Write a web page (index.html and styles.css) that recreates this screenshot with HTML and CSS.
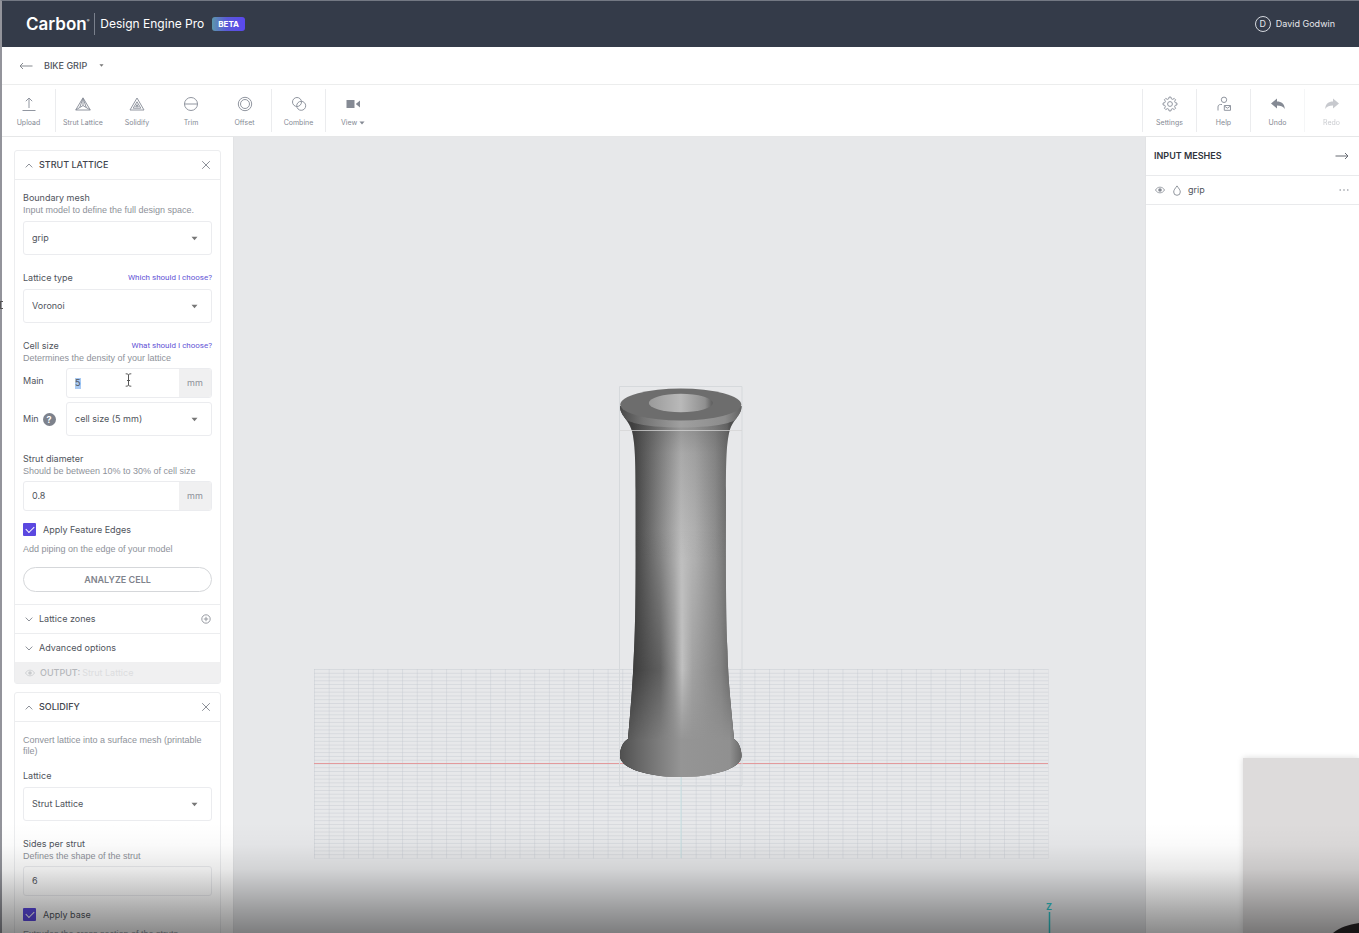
FILE: index.html
```
<!DOCTYPE html>
<html lang="en">
<head>
<meta charset="utf-8">
<title>Carbon Design Engine Pro</title>
<link rel="stylesheet" href="styles.css">
</head>
<body>
<svg width="0" height="0" class="defs" aria-hidden="true">
  <symbol id="caret" viewBox="0 0 8 5"><path d="M.6.6h6.8L4 4.6z" fill="currentColor"/></symbol>
  <symbol id="up" viewBox="0 0 8 5"><path d="M.7 4.4 4 1l3.300 3.400" fill="none" stroke="currentColor"/></symbol>
  <symbol id="down" viewBox="0 0 8 5"><path d="M.7.6 4 4 7.300.6" fill="none" stroke="currentColor"/></symbol>
  <symbol id="close" viewBox="0 0 10 10"><path d="m1.200 1.200 7.600 7.600m0-7.600L1.200 8.800" fill="none" stroke="currentColor"/></symbol>
  <symbol id="eye" viewBox="0 0 12 10"><path d="M1.500 5C3.500 1.200 8.500 1.200 10.500 5 8.500 8.800 3.500 8.800 1.500 5z" fill="none" stroke="currentColor" stroke-width=".8"/><circle cx="6" cy="5" r="1.800" fill="currentColor"/></symbol>
</svg>

<header class="topbar">
  <div class="brand"><span class="logo">Carbon<sup>®</sup></span><span class="product">Design Engine Pro</span><span class="badge">BETA</span></div>
  <button class="user"><span class="avatar">D</span>David Godwin</button>
</header>

<nav class="crumb">
  <button class="plain" aria-label="Back"><svg width="14" height="8" viewBox="0 0 14 8"><path d="M4 1 1 4l3 3M1 4h12.500" fill="none" stroke="#85898f"/></svg></button>
  <button class="project">BIKE GRIP <svg width="5" height="3"><use href="#caret"/></svg></button>
</nav>

<div class="toolbar">
  <div class="tools">
    <button class="tool sep"><svg viewBox="0 0 16 16"><path d="M8 12V2M4.800 5.200 8 2l3.200 3.200M1.500 14.500h13"/></svg>Upload</button>
    <button class="tool"><svg viewBox="0 0 16 16"><path d="M8 1.800 15.300 14H.7zM8 2v7.500M.9 13.900 8 9.500l7.100 4.400M8 2 4.800 11.300M8 2l3.200 9.300"/></svg>Strut Lattice</button>
    <button class="tool"><svg viewBox="0 0 16 16"><path d="M8 2 15 14H1zM8 5.800l3.800 6.400H4.200zM8 8.600l1.300 2.200H6.700z"/></svg>Solidify</button>
    <button class="tool"><svg viewBox="0 0 16 16"><circle cx="8" cy="8" r="6.500"/><path d="M1.500 8h13"/></svg>Trim</button>
    <button class="tool sep"><svg viewBox="0 0 16 16"><circle cx="8" cy="8" r="6.700"/><circle cx="8" cy="8" r="4.500"/></svg>Offset</button>
    <button class="tool sep"><svg viewBox="0 0 16 16"><circle cx="6" cy="6" r="4.500"/><circle cx="10.200" cy="9.800" r="4.500"/></svg>Combine</button>
    <button class="tool"><svg viewBox="0 0 16 16"><path class="solid" d="M1.500 4h8v8h-8zM15 4.500v7L10.800 8z"/></svg><span>View <svg class="tiny"><use href="#caret"/></svg></span></button>
  </div>
  <div class="tools right">
    <button class="tool"><svg viewBox="0 0 16 16"><g transform="translate(8 8)"><path stroke-linejoin="round" d="M-1.300-5.200-1-6.900H1L1.300-5.200 2.800-4.600 4.200-5.600 5.600-4.200 4.600-2.800 5.200-1.300 6.900-1V1L5.200 1.300 4.600 2.800 5.600 4.200 4.200 5.600 2.800 4.600 1.300 5.200 1 6.900H-1L-1.300 5.200-2.800 4.600-4.200 5.600-5.600 4.200-4.600 2.800-5.200 1.300-6.900 1V-1L-5.200-1.300-4.600-2.800-5.600-4.200-4.200-5.600-2.800-4.600z"/><circle r="2.400"/></g></svg>Settings</button>
    <button class="tool"><svg viewBox="0 0 16 16"><circle cx="8" cy="3.800" r="2.700"/><path d="M2 14.500V11c0-1.600 1-2.500 2.500-2.500H6M8.300 9.500h6.200v4.800H8.300zM8.300 10l3.100 2.200 3.100-2.200"/></svg>Help</button>
    <button class="tool"><svg viewBox="0 0 16 16"><path class="solid" d="M1 7.500 7 2.500v3c4.500 0 7.500 2 7.800 7.500C13 10.200 10.500 9.500 7 9.500v3z"/></svg>Undo</button>
    <button class="tool" disabled><svg viewBox="0 0 16 16"><path class="solid" d="M15 7.500 9 2.500v3c-4.500 0-7.500 2-7.800 7.500C3 10.200 5.500 9.500 9 9.500v3z"/></svg>Redo</button>
  </div>
</div>

<main class="work">
  <aside class="side">
    <section class="card">
      <div class="card-head"><svg width="8" height="5"><use href="#up"/></svg><h2>STRUT LATTICE</h2><button class="plain" aria-label="Close"><svg width="10" height="10"><use href="#close"/></svg></button></div>
      <div class="card-body">
        <div class="field">
          <label for="mesh">Boundary mesh</label><p>Input model to define the full design space.</p>
          <div class="select"><select id="mesh"><option>grip</option></select><svg><use href="#caret"/></svg></div>
        </div>
        <div class="field">
          <div class="row"><label for="type">Lattice type</label><a href="#">Which should I choose?</a></div>
          <div class="select"><select id="type"><option>Voronoi</option></select><svg><use href="#caret"/></svg></div>
        </div>
        <div class="field">
          <div class="row"><label for="main">Cell size</label><a href="#">What should I choose?</a></div><p>Determines the density of your lattice</p>
          <div class="pair"><label for="main">Main</label><div class="unit"><input id="main" class="marked" value="5"><span>mm</span></div></div>
          <div class="pair"><label for="min">Min <i class="help">?</i></label><div class="select"><select id="min"><option>cell size (5 mm)</option></select><svg><use href="#caret"/></svg></div></div>
        </div>
        <div class="field">
          <label for="diameter">Strut diameter</label><p>Should be between 10% to 30% of cell size</p>
          <div class="unit"><input id="diameter" value="0.8"><span>mm</span></div>
        </div>
        <div class="check"><input type="checkbox" id="edges" checked><label for="edges">Apply Feature Edges</label></div>
        <p>Add piping on the edge of your model</p>
        <button class="analyze">ANALYZE CELL</button>
      </div>
      <div class="fold"><svg width="8" height="5"><use href="#down"/></svg>Lattice zones<button class="plain" aria-label="Add zone"><svg width="10" height="10" viewBox="0 0 10 10"><g fill="none" stroke="currentColor" stroke-width=".9"><circle cx="5" cy="5" r="4.200"/><path d="M5 2.800v4.400M2.800 5h4.400"/></g></svg></button></div>
      <div class="fold"><svg width="8" height="5"><use href="#down"/></svg>Advanced options</div>
      <div class="output"><svg width="12" height="10"><use href="#eye"/></svg><b>OUTPUT:</b><span>Strut Lattice</span></div>
    </section>
    <section class="card">
      <div class="card-head"><svg width="8" height="5"><use href="#up"/></svg><h2>SOLIDIFY</h2><button class="plain" aria-label="Close"><svg width="10" height="10"><use href="#close"/></svg></button></div>
      <div class="card-body">
        <p class="intro">Convert lattice into a surface mesh (printable file)</p>
        <div class="field">
          <label for="lattice">Lattice</label>
          <div class="select"><select id="lattice"><option>Strut Lattice</option></select><svg><use href="#caret"/></svg></div>
        </div>
        <div class="field">
          <label for="sides">Sides per strut</label><p>Defines the shape of the strut</p>
          <div class="unit"><input id="sides" value="6"></div>
        </div>
        <div class="check"><input type="checkbox" id="base" checked><label for="base">Apply base</label></div>
        <p>Extrudes the cross section of the struts</p>
      </div>
    </section>
  </aside>

  <section class="viewport" aria-label="3D view">
    <svg viewBox="234 137 911 796" preserveAspectRatio="xMidYMin meet">
      <defs>
        <pattern id="grid" x="314" y="669" width="14.680" height="3.780" patternUnits="userSpaceOnUse"><path d="M0 .5h14.680" stroke="#bfc4cb" stroke-width=".8" opacity=".5"/><path d="M.5 0v3.780" stroke="#bcc4cb" stroke-width=".8" opacity=".45"/></pattern>
        <linearGradient id="body" gradientUnits="userSpaceOnUse" x1="632" x2="730" y1="0" y2="0"><stop offset="0" stop-color="#3c3c3c"/><stop offset=".1" stop-color="#585858"/><stop offset=".3" stop-color="#8c8c8c"/><stop offset=".5" stop-color="#c0c0c0"/><stop offset=".64" stop-color="#b4b4b4"/><stop offset=".85" stop-color="#909090"/><stop offset=".97" stop-color="#707070"/><stop offset="1" stop-color="#555"/></linearGradient>
        <linearGradient id="low" gradientUnits="userSpaceOnUse" x1="624" x2="738" y1="0" y2="0"><stop offset="0" stop-color="#303030"/><stop offset=".1" stop-color="#404040"/><stop offset=".32" stop-color="#606060"/><stop offset=".44" stop-color="#949494"/><stop offset=".51" stop-color="#c0c0c0"/><stop offset=".6" stop-color="#a2a2a2"/><stop offset=".85" stop-color="#828282"/><stop offset="1" stop-color="#555"/></linearGradient>
        <linearGradient id="foot" gradientUnits="userSpaceOnUse" x1="620" x2="742" y1="0" y2="0"><stop offset="0" stop-color="#505050"/><stop offset=".15" stop-color="#666"/><stop offset=".5" stop-color="#959595"/><stop offset=".9" stop-color="#909090"/><stop offset="1" stop-color="#6a6a6a"/></linearGradient>
        <linearGradient id="rim" x2="1"><stop offset="0" stop-color="#454545"/><stop offset=".2" stop-color="#747474"/><stop offset=".5" stop-color="#a0a0a0"/><stop offset=".85" stop-color="#8c8c8c"/><stop offset="1" stop-color="#5a5a5a"/></linearGradient>
        <linearGradient id="hole" x2="1"><stop offset="0" stop-color="#9a9a9a"/><stop offset=".5" stop-color="#b9b9b9"/><stop offset=".88" stop-color="#8f8f8f"/><stop offset="1" stop-color="#5c5c5c"/></linearGradient>
        <linearGradient id="neck" x2="0" y2="1"><stop offset="0" stop-color="#444" stop-opacity=".4"/><stop offset=".25" stop-color="#444" stop-opacity=".18"/><stop offset="1" stop-color="#444" stop-opacity="0"/></linearGradient>
        <linearGradient id="m1" gradientUnits="userSpaceOnUse" x1="0" x2="0" y1="530" y2="670"><stop offset="0" stop-color="#000"/><stop offset="1" stop-color="#fff"/></linearGradient>
        <linearGradient id="m2" gradientUnits="userSpaceOnUse" x1="0" x2="0" y1="670" y2="758"><stop offset="0" stop-color="#000"/><stop offset=".8" stop-color="#fff"/></linearGradient>
        <mask id="lowMask"><path d="M600 380h160v410H600z" fill="url(#m1)"/></mask>
        <mask id="footMask"><path d="M600 380h160v410H600z" fill="url(#m2)"/></mask>
        <path id="shape" d="M620 406c0 10 8 12 12 25 3 12 3.500 30 3.500 60 0 70 .5 120-1.500 160-1 30-3.500 60-6 88-5 3-8 9-8 17 0 12 27 21 61 21s60.500-9 60.500-21c0-8-3-14-7.500-17-2.500-28-6-58-6.500-88-2-40-1.500-90-1.500-160 0-30 .5-48 3.500-60 4-13 12-15 12-25z"/>
        <clipPath id="inside"><use href="#shape"/></clipPath>
      </defs>
      <path d="M314 669h734.500v189.500H314z" fill="url(#grid)"/>
      <path d="M314 763.500h734" stroke="#e39a9d"/>
      <path d="M681 777v81" stroke="#c8e2e4"/>
      <path d="M619.500 386.500h122.500v399H619.500z" fill="none" stroke="#d6d9dc"/>
      <use href="#shape" fill="url(#body)"/>
      <use href="#shape" fill="url(#low)" mask="url(#lowMask)"/>
      <use href="#shape" fill="url(#foot)" mask="url(#footMask)"/>
      <g clip-path="url(#inside)">
        <path d="M618 418h126v142H618z" fill="url(#neck)"/>
        <path d="M618 405c0 14 10 16 16 18 22 6 72 6 94 0 6-2 16-4 16-18z" fill="url(#rim)"/>
      </g>
      <ellipse cx="680.800" cy="404.500" rx="60.500" ry="16" fill="#6d6d6d"/>
      <ellipse cx="680.800" cy="403" rx="32" ry="9.300" fill="url(#hole)"/>
      <path d="M620 430.500h122" stroke="#d5d5d5" opacity=".75"/>
      <text x="1046" y="910" class="axis">Z</text>
      <path d="M1049.500 912v21" stroke="#2fc4c9" stroke-width="1.500"/>
    </svg>
  </section>

  <aside class="meshes">
    <div class="mesh-head"><h2>INPUT MESHES</h2><button class="plain" aria-label="Collapse"><svg width="14" height="8" viewBox="0 0 14 8"><path d="m10 1 3 3-3 3m3-3H.5" fill="none" stroke="#666a72"/></svg></button></div>
    <div class="mesh"><svg width="12" height="10"><use href="#eye"/></svg><svg width="8" height="11" viewBox="0 0 8 11"><path d="M4 .9C5.800 3.500 7.300 5 7.300 7A3.300 3.300 0 0 1 .7 7C.7 5 2.200 3.500 4 .9z" fill="none" stroke="#858a93" stroke-width=".9"/></svg><span>grip</span><button class="plain" aria-label="More"><svg width="10" height="4" viewBox="0 0 10 4" fill="currentColor"><circle cx="1.200" cy="2" r=".8"/><circle cx="5" cy="2" r=".8"/><circle cx="8.800" cy="2" r=".8"/></svg></button></div>
  </aside>
</main>

<div class="camera"><svg width="26" height="10" viewBox="0 0 26 10"><path d="M0 10C7 4 15 2 26 0v10z" fill="#2a2627"/></svg></div>
<svg class="cursor" width="7" height="14" viewBox="0 0 7 14"><path d="M.7.8c1.800 0 2.800.4 2.800 1.400v9.600c0 1-1 1.400-2.800 1.400M6.300.8c-1.800 0-2.800.4-2.800 1.400v9.600c0 1 1 1.400 2.800 1.400M2 7.500h3" fill="none" stroke="#555"/></svg>
<div class="shade"></div>
</body>
</html>
```
FILE: styles.css
```
* { box-sizing: border-box; }
html, body { height: 100%; }
body {
  margin: 0;
  display: flex;
  flex-direction: column;
  overflow: hidden;
  border-left: 2px solid #93949b;
  border-top: 1px solid #737883;
  background: #fff;
  color: #50545c;
  font: 9px/12px Inter, "Liberation Sans", sans-serif;
}
body::before {
  content: "";
  position: absolute;
  left: 0;
  top: 301px;
  width: 2px;
  height: 6px;
  border: 1px solid #555;
  border-right: 0;
}
.defs { position: absolute; }
button, input, select { font: inherit; color: inherit; margin: 0; }
button { border: 0; background: none; padding: 0; }
svg { display: block; flex: none; }
h2, p { margin: 0; font-size: 9px; font-weight: 400; }

.topbar {
  height: 46px;
  flex: none;
  display: flex;
  align-items: center;
  justify-content: space-between;
  padding: 0 24px;
  background: #343b49;
  color: #fff;
}
.brand { display: flex; align-items: center; }
.logo {
  font-size: 17px;
  line-height: 22px;
  font-weight: 600;
  padding-right: 5px;
  border-right: 1px solid #7a808c;
}
.logo sup { font-size: 4px; line-height: 4px; vertical-align: 8px; }
.product { font-size: 12px; padding-left: 5px; }
.badge {
  margin-left: 8px;
  padding: 0 6px;
  border-radius: 3px;
  font-size: 8px;
  line-height: 14px;
  font-weight: 700;
  background: linear-gradient(90deg, #5c97ac, #5a59d8 45%, #5a48ee);
}
.user { display: flex; align-items: center; gap: 5px; color: #e6e8ec; }
.avatar {
  width: 16px;
  height: 16px;
  border: 1px solid #d5d8de;
  border-radius: 50%;
  line-height: 14px;
  text-align: center;
}

.crumb {
  height: 38px;
  flex: none;
  display: flex;
  align-items: center;
  gap: 11px;
  padding: 0 17px;
  border-bottom: 1px solid #eceded;
}
.project { display: flex; align-items: center; gap: 12px; font-weight: 500; }
.project svg { color: #777; }

.toolbar {
  height: 52px;
  flex: none;
  display: flex;
  justify-content: space-between;
  padding: 4px 0;
  border-bottom: 1px solid #e6e7e8;
}
.tools { display: flex; }
.tool {
  width: 54px;
  display: flex;
  flex-direction: column;
  align-items: center;
  justify-content: center;
  gap: 5px;
  padding-top: 4px;
  font-size: 7px;
  color: #858a94;
}
.tool > svg { width: 16px; height: 16px; fill: none; stroke: #9196a0; stroke-width: 1; }
.tool .solid { fill: #858a94; stroke: none; }
.tool:disabled { opacity: .45; }
.sep { border-right: 1px solid #ebecee; }
.right { padding-right: 1px; }
.right .tool { border-left: 1px solid #ebecee; }
.tool .tiny { display: inline-block; width: 6px; height: 4px; }

.work { flex: 1; min-height: 0; display: flex; }
.side {
  width: 232px;
  flex: none;
  overflow: hidden;
  padding: 13px 12px 0;
  border-right: 1px solid #e2e3e5;
}
.card { border: 1px solid #ecedef; border-radius: 3px; margin-bottom: 8px; }
.card-head, .fold {
  display: flex;
  align-items: center;
  gap: 6px;
  height: 29px;
  padding: 0 9px 0 10px;
}
.card-head { border-bottom: 1px solid #ecedef; }
.card-head h2 { font-weight: 500; color: #41454d; }
.card svg { color: #8d9199; }
.plain { color: #8d9199; }
.card-head .plain, .fold .plain { margin-left: auto; }
.card-body { padding: 12px 8px; }
.field { margin-bottom: 17px; }
.field label { display: block; }
p { font-family: "Liberation Sans", Arial, sans-serif; color: #8e929a; }
.row { display: flex; justify-content: space-between; align-items: center; }
.row a { font-family: Roboto, sans-serif; font-size: 8px; color: #6353d6; text-decoration: none; }
.select { position: relative; margin-top: 5px; }
.select select {
  appearance: none;
  display: block;
  width: 100%;
  height: 34px;
  padding: 0 8px;
  border: 1px solid #ebecef;
  border-radius: 3px;
  background: #fff;
}
.select svg { position: absolute; right: 14px; top: 15px; width: 7px; height: 5px; color: #777; }
.unit {
  display: flex;
  height: 30px;
  margin-top: 4px;
  border: 1px solid #ebecef;
  border-radius: 3px;
  overflow: hidden;
}
.unit input { flex: 1; min-width: 0; border: 0; outline: 0; padding: 0 8px; background: none; }
.unit span { width: 32px; background: #f0f0f1; color: #8e929a; text-align: center; line-height: 28px; }
.unit .marked { background: linear-gradient(#a9caf3, #a9caf3) 8px 9px / 6px 11px no-repeat; }
.pair { display: grid; grid-template-columns: 43px 1fr; align-items: center; }
.pair .select { margin-top: 4px; }
.field .pair label { display: flex; align-items: center; gap: 4px; }
.pair:last-child { align-items: end; }
.pair:last-child label { height: 34px; }
.help {
  width: 13px;
  height: 13px;
  border-radius: 50%;
  background: #7d828c;
  color: #fff;
  font-style: normal;
  font-weight: 700;
  line-height: 13px;
  text-align: center;
}
.check { display: flex; align-items: center; gap: 7px; margin: -5px 0 7px; }
.check input {
  appearance: none;
  width: 13px;
  height: 13px;
  border-radius: 1px;
  background: #5b48e0;
  display: grid;
  place-items: center;
}
.check input::after {
  content: "";
  width: 7px;
  height: 4px;
  margin-bottom: 2px;
  border: solid #fff;
  border-width: 0 0 1px 1px;
  transform: rotate(-45deg);
}
.analyze {
  display: block;
  width: 100%;
  height: 25px;
  margin-top: 12px;
  border: 1px solid #d5d7da;
  border-radius: 13px;
  font-weight: 600;
  color: #7f838c;
}
.fold { border-top: 1px solid #ecedef; }
.output {
  display: flex;
  align-items: center;
  height: 21px;
  padding-left: 9px;
  background: #f0f0f1;
  color: #dcdddf;
}
.output svg { color: #c8cacd; }
.output b { font-weight: 500; color: #b5b7bb; margin: 0 2px 0 4px; }
.intro { line-height: 11px; margin: 1px 0 13px; }

.viewport { flex: 1; min-width: 0; background: #e7e8ea; }
.viewport svg { width: 100%; height: 100%; }
.axis { font: 700 9px Inter, sans-serif; fill: #2fc4c9; }

.meshes { width: 214px; flex: none; border-left: 1px solid #e2e3e5; }
.mesh-head, .mesh {
  display: flex;
  align-items: center;
  padding: 0 10px 0 8px;
  border-bottom: 1px solid #e9eaec;
}
.mesh-head { height: 39px; justify-content: space-between; }
.mesh-head h2 { font-weight: 600; color: #2f333b; }
.mesh { height: 29px; gap: 7px; color: #858a93; }
.mesh span { color: #50545c; }
.mesh .plain { margin-left: auto; }

.camera {
  position: absolute;
  right: 0;
  bottom: 0;
  width: 116px;
  height: 175px;
  display: flex;
  align-items: flex-end;
  justify-content: flex-end;
  background: #dddbdb;
  box-shadow: 0 0 6px rgba(0, 0, 0, .15);
}
.cursor { position: absolute; left: 125px; top: 373px; }
.shade {
  position: absolute;
  left: 0;
  right: 0;
  bottom: 0;
  height: 110px;
  pointer-events: none;
  background: linear-gradient(transparent, rgba(0, 0, 0, .02) 20%, rgba(0, 0, 0, .09) 42%, rgba(0, 0, 0, .21) 61%, rgba(0, 0, 0, .33) 79%, rgba(0, 0, 0, .46));
}
```
